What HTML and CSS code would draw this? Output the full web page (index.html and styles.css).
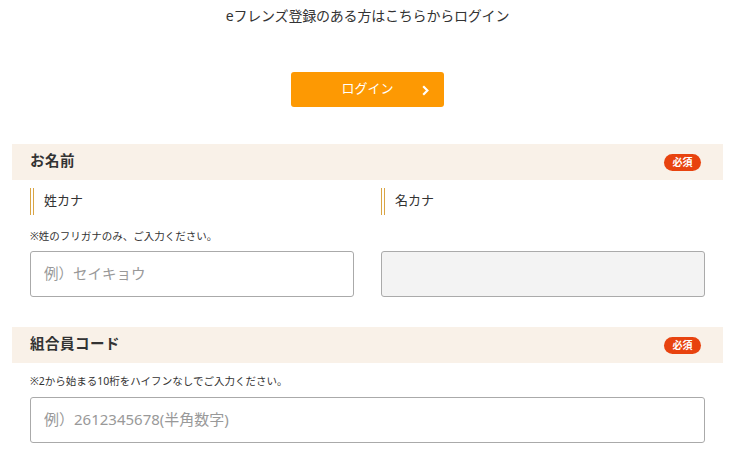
FILE: index.html
```html
<!DOCTYPE html>
<html lang="ja">
<head>
<meta charset="utf-8">
<title>ログイン</title>
<link rel="stylesheet" href="styles.css">
</head>
<body>
<div class="page">
  <p class="lead">eフレンズ登録のある方はこちらからログイン</p>
  <div class="btn-wrap">
    <button class="login-btn" type="button">ログイン
      <svg class="chev" width="7" height="11" viewBox="0 0 7 11"><path d="M1.2 1.2 L5.4 5.5 L1.2 9.8" fill="none" stroke="#fff" stroke-width="2.2"/></svg>
    </button>
  </div>

  <div class="band band-first">
    <span class="band-title">お名前</span>
    <span class="badge">必須</span>
  </div>
  <div class="fields">
    <div class="sub-label">姓カナ</div>
    <div class="sub-label">名カナ</div>
    <p class="note">※姓のフリガナのみ、ご入力ください。</p>
    <div></div>
    <input class="text-input" type="text" placeholder="例）セイキョウ">
    <input class="text-input disabled" type="text" disabled>
  </div>

  <div class="band band-second">
    <span class="band-title">組合員コード</span>
    <span class="badge">必須</span>
  </div>
  <div class="code-field">
    <p class="note note-code">※2から始まる10桁をハイフンなしでご入力ください。</p>
    <input class="text-input wide" type="text" placeholder="例）2612345678(半角数字)">
  </div>
</div>
</body>
</html>
```

FILE: styles.css
```css
body {
  margin: 0;
  background: #fff;
  font-family: "Noto Sans", "Noto Sans CJK JP", "Liberation Sans", sans-serif;
  color: #333;
}

.page {
  width: 711px;
  margin-left: 12px;
}

.lead {
  margin: 0;
  padding-top: 6px;
  text-align: center;
  font-size: 14px;
  line-height: 20px;
  color: #333;
  letter-spacing: -0.2px;
}

.btn-wrap {
  display: flex;
  justify-content: center;
  margin-top: 46px;
}

.login-btn {
  position: relative;
  width: 153px;
  height: 35px;
  border: none;
  border-radius: 3px;
  background: #fd9903;
  color: #fff;
  font-family: inherit;
  font-size: 13px;
  padding: 0 0 4px;
  cursor: pointer;
}

.chev {
  position: absolute;
  right: 15px;
  top: 13px;
}

.band {
  box-sizing: border-box;
  height: 36px;
  background: #f9f1e8;
  display: flex;
  align-items: center;
  justify-content: space-between;
  padding: 0 22px 0 18px;
}

.band-first {
  margin-top: 37px;
}

.band-second {
  margin-top: 30px;
}

.band-title {
  font-size: 14.5px;
  font-weight: bold;
  letter-spacing: 0.5px;
  line-height: 20px;
  padding-bottom: 4px;
  color: #333;
}

.badge {
  width: 37px;
  height: 17px;
  border-radius: 9px;
  background: #e8430f;
  color: #fff;
  font-size: 10px;
  font-weight: bold;
  line-height: 16px;
  text-align: center;
}

.fields {
  display: grid;
  grid-template-columns: 324px 324px;
  column-gap: 27px;
  padding: 0 18px;
  margin-top: 8px;
}

.sub-label {
  border-left: 4px double #d9a545;
  height: 27px;
  line-height: 24px;
  padding-left: 10px;
  font-size: 13px;
  color: #333;
}

.note {
  margin: 13px 0 7px;
  font-size: 10.5px;
  line-height: 16px;
  color: #333;
}

.text-input {
  box-sizing: border-box;
  height: 46px;
  width: 100%;
  border: 1px solid #aaa;
  border-radius: 3px;
  padding: 0 13px 2px;
  font-family: inherit;
  font-size: 14.5px;
  color: #333;
  background: #fff;
  margin: 0;
}

.text-input::placeholder {
  color: #999;
}

.text-input.wide {
  font-size: 15px;
}

.text-input.disabled {
  background: #f3f3f3;
}

.code-field {
  padding: 0 18px;
}

.note-code {
  margin: 10px 0 8px;
}
```
